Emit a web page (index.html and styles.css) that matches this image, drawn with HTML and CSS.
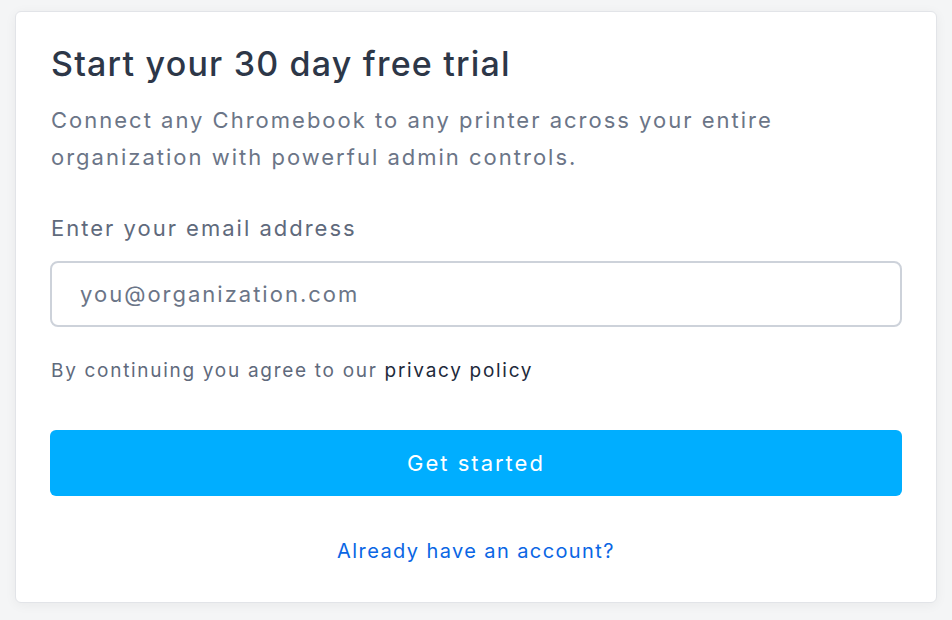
FILE: index.html
```html
<!DOCTYPE html>
<html>
  <head>
    <title>Start your free trial</title>
    <link rel="stylesheet" href="styles.css">
  </head>
  <body>
    <div class="card">
      <h1>Start your 30 day free trial</h1>
      <p class="lead">
        Connect any Chromebook to any printer across your entire
        organization with powerful admin controls.
      </p>

      <form class="signup">
        <label class="label" for="email">Enter your email address</label>
        <input class="input" id="email" type="email" placeholder="you@organization.com" />

        <p class="terms">
          By continuing you agree to our <a href="#" class="terms-link">privacy policy</a>
        </p>

        <button class="button" type="button">Get started</button>
      </form>

      <a href="#" class="login">Already have an account?</a>
    </div>
  </body>
</html>
```

FILE: styles.css
```css
body {
  margin: 0;
  padding: 11px 15px;
  background: #f4f5f6;
  font-family: Inter, "Open Sans", sans-serif;
}

.card {
  background: #fff;
  border: 1px solid #e2e4e8;
  border-radius: 6px;
  box-shadow: 0 2px 12px rgba(0, 0, 0, 0.05);
  padding: 32px 34px 30px 34px;
  height: 592px;
  box-sizing: border-box;
  display: flex;
  flex-direction: column;
}

h1 {
  margin: 0;
  padding-left: 1px;
  color: #2d3748;
  font-size: 34px;
  font-weight: 500;
  line-height: 40px;
  letter-spacing: 1.2px;
}

.lead {
  margin: 18px 0 0;
  padding-left: 1px;
  max-width: 760px;
  color: #6b7587;
  font-size: 22px;
  line-height: 37px;
  letter-spacing: 2px;
}

.signup {
  display: flex;
  flex-direction: column;
  margin-top: 37px;
}

.label {
  padding-left: 1px;
  color: #5f6a7c;
  font-size: 22px;
  line-height: 30px;
  letter-spacing: 2px;
}

.input {
  margin-top: 18px;
  height: 66px;
  box-sizing: border-box;
  border: 2px solid #cdd2da;
  border-radius: 8px;
  padding: 0 28px;
  font-family: inherit;
  font-size: 22px;
  letter-spacing: 2px;
  color: #2d3748;
  outline: none;
}

.input::placeholder {
  color: #6b7587;
}

.terms {
  margin: 31px 0 0;
  padding-left: 1px;
  color: #5f6a7c;
  font-size: 19px;
  line-height: 26px;
  letter-spacing: 1.7px;
}

.terms-link {
  color: #1e2a3b;
  text-decoration: none;
}

.button {
  margin-top: 46px;
  height: 66px;
  border: none;
  border-radius: 6px;
  background: #00aeff;
  color: #fff;
  font-family: inherit;
  font-size: 22px;
  letter-spacing: 2px;
  cursor: pointer;
}

.login {
  margin-top: 43px;
  align-self: center;
  color: #0a66e4;
  font-size: 20px;
  line-height: 24px;
  letter-spacing: 1.4px;
  text-decoration: none;
}
```
